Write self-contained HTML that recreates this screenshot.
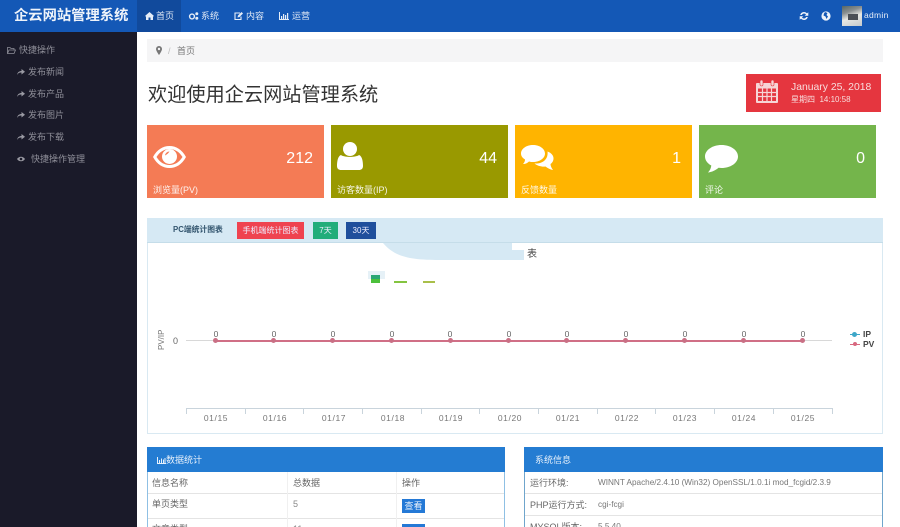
<!DOCTYPE html>
<html lang="zh">
<head>
<meta charset="utf-8">
<title>企云网站管理系统</title>
<style>
html,body{margin:0;padding:0;background:#fff;width:900px;height:527px;overflow:hidden;}
#w{position:relative;width:900px;height:527px;overflow:hidden;font-family:"Liberation Sans","Noto Sans CJK SC",sans-serif;font-size:9px;color:#666;}
.a{position:absolute;white-space:nowrap;}
svg{position:absolute;display:block;overflow:visible;}
.side{color:#8f8f99;font-size:9px;line-height:12px;}
.nav{color:#dfe8f5;font-size:9px;line-height:12px;}
.card{position:absolute;top:125px;width:177px;height:73px;}
.card .n{position:absolute;right:11px;top:24px;font-size:16px;line-height:20px;color:#fff;}
.card .l{position:absolute;left:6px;top:59px;font-size:9px;line-height:12px;color:#fff;opacity:.9;white-space:nowrap;}
.btn{position:absolute;top:222px;height:17px;line-height:17px;text-align:center;color:#eef;font-size:8px;}
.tk{position:absolute;top:408px;width:1px;height:6px;background:#c9d4dc;}
.xl{position:absolute;top:413px;width:40px;text-align:center;font-size:8.5px;line-height:11px;color:#777;letter-spacing:.6px;}
.z{position:absolute;top:329px;width:12px;text-align:center;font-size:8.5px;line-height:11px;color:#666;}
.dot{position:absolute;top:338px;width:5px;height:5px;border-radius:50%;background:#c97085;}
.hl{position:absolute;height:1px;background:#e4e4e4;}
.vl{position:absolute;width:1px;background:#f0f0f0;}
</style>
</head>
<body>
<div id="w">
<!-- header -->
<div class="a" style="left:0;top:0;width:900px;height:32px;background:#1458b6;"></div>
<div class="a" style="left:137px;top:0;width:44px;height:32px;background:#114a9c;"></div>
<div class="a" style="left:14px;top:6px;font-size:14.3px;line-height:20px;font-weight:bold;color:#eef3fa;">企云网站管理系统</div>

<svg style="left:145px;top:12px" width="9" height="8" viewBox="0 0 9 8"><path d="M0 4 4.500 0 9 4 8 4.600V8H5.500V5.500H3.500V8H1V4.600Z" fill="#e6edf7"/></svg>
<div class="a nav" style="left:156px;top:10px;">首页</div>
<svg style="left:189px;top:12px" width="10" height="8" viewBox="0 0 10 8"><circle cx="3" cy="4.500" r="2.400" fill="none" stroke="#e6edf7" stroke-width="1.400"/><circle cx="7.800" cy="1.800" r="1.500" fill="#e6edf7"/><circle cx="7.800" cy="6.200" r="1.500" fill="#e6edf7"/></svg>
<div class="a nav" style="left:201px;top:10px;">系统</div>
<svg style="left:234px;top:12px" width="9" height="8" viewBox="0 0 9 8"><path d="M6 1H1V7.500H7V4.500" fill="none" stroke="#e6edf7" stroke-width="1.100"/><path d="M3.500 5.500 4 3.500 7.500 0 9 1.500 5.500 5Z" fill="#e6edf7"/></svg>
<div class="a nav" style="left:246px;top:10px;">内容</div>
<svg style="left:279px;top:12px" width="10" height="8" viewBox="0 0 10 8"><path d="M.5 0V7.500H10" fill="none" stroke="#e6edf7"/><path d="M2 4h1.200v3H2zM4 2h1.200v5H4zM6 3h1.200v4H6zM8 1h1.200v6H8z" fill="#e6edf7"/></svg>
<div class="a nav" style="left:292px;top:10px;">运营</div>

<svg style="left:799px;top:11px" width="10" height="10" viewBox="0 0 10 10"><path d="M1.200 4A3.900 3.900 0 0 1 8 2.400L9.300 1.200V4.800H5.700L7 3.500A2.400 2.400 0 0 0 2.800 4ZM8.800 6A3.900 3.900 0 0 1 2 7.600L.7 8.800V5.200H4.300L3 6.500A2.400 2.400 0 0 0 7.200 6Z" fill="#eef3fa"/></svg>
<svg style="left:821px;top:11px" width="10" height="10" viewBox="0 0 10 10"><circle cx="5" cy="5" r="4.600" fill="#eef3fa"/><path d="M4 1 6.500 2 5.500 4 7 5.500 5.500 8 4.500 5.500 2.500 4.500 3 2.500Z" fill="#1458b6"/></svg>
<div class="a" style="left:842px;top:6px;width:20px;height:20px;background:linear-gradient(160deg,#566 0,#8a8f90 30%,#e8e8e4 55%,#c4c9cc 100%);"></div>
<div class="a" style="left:848px;top:14px;width:10px;height:6px;background:#4b4f55;"></div>
<div class="a" style="left:864px;top:9px;font-size:8.5px;line-height:12px;color:#e6edf7;letter-spacing:.3px;">admin</div>

<!-- sidebar -->
<div class="a" style="left:0;top:32px;width:137px;height:495px;background:#1a1a29;"></div>
<svg style="left:7px;top:47px" width="9" height="7" viewBox="0 0 9 7"><path d="M.5 6.500V.5H3L4 1.500H7V3M.5 6.500H7L8.500 3H2Z" fill="none" stroke="#8f8f99" stroke-width=".8"/></svg>
<div class="a side" style="left:19px;top:44px;">快捷操作</div>
<svg style="left:17px;top:69px" width="8" height="6" viewBox="0 0 8 6"><path d="M0 6C.5 3 2.500 2 4.500 2V0L8 2.800 4.500 5.500V3.500C2.500 3.500 1 4 0 6Z" fill="#9a9aa3"/></svg>
<div class="a side" style="left:28px;top:66px;">发布新闻</div>
<svg style="left:17px;top:91px" width="8" height="6" viewBox="0 0 8 6"><path d="M0 6C.5 3 2.500 2 4.500 2V0L8 2.800 4.500 5.500V3.500C2.500 3.500 1 4 0 6Z" fill="#9a9aa3"/></svg>
<div class="a side" style="left:28px;top:88px;">发布产品</div>
<svg style="left:17px;top:112px" width="8" height="6" viewBox="0 0 8 6"><path d="M0 6C.5 3 2.500 2 4.500 2V0L8 2.800 4.500 5.500V3.500C2.500 3.500 1 4 0 6Z" fill="#9a9aa3"/></svg>
<div class="a side" style="left:28px;top:109px;">发布图片</div>
<svg style="left:17px;top:134px" width="8" height="6" viewBox="0 0 8 6"><path d="M0 6C.5 3 2.500 2 4.500 2V0L8 2.800 4.500 5.500V3.500C2.500 3.500 1 4 0 6Z" fill="#9a9aa3"/></svg>
<div class="a side" style="left:28px;top:131px;">发布下载</div>
<svg style="left:17px;top:156px" width="8" height="6" viewBox="0 0 8 6"><path d="M0 3C2 0 6 0 8 3 6 6 2 6 0 3Z" fill="#9a9aa3"/><circle cx="4" cy="3" r="1.300" fill="#1a1a29"/></svg>
<div class="a side" style="left:31px;top:153px;">快捷操作管理</div>

<!-- breadcrumb -->
<div class="a" style="left:147px;top:39px;width:736px;height:23px;background:#f5f5f6;"></div>
<svg style="left:156px;top:46px" width="6" height="9" viewBox="0 0 6 9"><path d="M3 0A3 3 0 0 0 0 3C0 5 3 9 3 9S6 5 6 3A3 3 0 0 0 3 0Z" fill="#777"/><circle cx="3" cy="3" r="1.200" fill="#f5f5f6"/></svg>
<div class="a" style="left:168px;top:45px;font-size:9px;line-height:12px;color:#bbb;">/</div>
<div class="a" style="left:177px;top:45px;font-size:9px;line-height:12px;color:#777;">首页</div>

<!-- title -->
<div class="a" style="left:148px;top:83px;font-size:19.2px;line-height:26px;color:#333;">欢迎使用企云网站管理系统</div>

<!-- date -->
<div class="a" style="left:746px;top:74px;width:135px;height:38px;background:#e5363f;"></div>
<svg style="left:756px;top:80px" width="22" height="23" viewBox="0 0 22 23"><path d="M1 3H21Q22 3 22 4V22Q22 23 21 23H1Q0 23 0 22V4Q0 3 1 3Z" fill="#f6d5d6"/><path d="M2 8.500H20V21H2Z" fill="#e5363f"/><path d="M2 12.500H20M2 16.500H20M6.500 8.500V21M11 8.500V21M15.500 8.500V21" stroke="#f6d5d6" stroke-width="1.200"/><rect x="4" y="0" width="3" height="6" rx="1.500" fill="#f6d5d6" stroke="#e5363f" stroke-width=".6"/><rect x="15" y="0" width="3" height="6" rx="1.500" fill="#f6d5d6" stroke="#e5363f" stroke-width=".6"/></svg>
<div class="a" style="left:791px;top:81px;font-size:10.4px;line-height:14px;color:#f8dcdc;">January 25, 2018</div>
<div class="a" style="left:791px;top:94px;font-size:8px;line-height:12px;color:#f8dcdc;">星期四&nbsp;&nbsp;14:10:58</div>

<!-- cards -->
<div class="card" style="left:147px;background:#f47b55;">
  <svg style="left:6px;top:21px" width="33" height="22" viewBox="0 0 33 22"><path d="M0 11C4 3.500 10 0 16.500 0S29 3.500 33 11C29 18.500 23 22 16.500 22S4 18.500 0 11ZM3.500 11C7 16.500 11.500 19 16.500 19S26 16.500 29.500 11C26 5.500 21.500 3 16.500 3S7 5.500 3.500 11Z" fill="#fff" fill-rule="evenodd"/><circle cx="16.500" cy="10.500" r="7.500" fill="#fff"/><path d="M12 9.500A4.500 4.500 0 0 1 16.500 5.500C15.500 7 14 8.500 12 9.500Z" fill="#f47b55"/></svg>
  <div class="n">212</div><div class="l">浏览量(PV)</div>
</div>
<div class="card" style="left:331px;background:#999900;">
  <svg style="left:6px;top:17px" width="26" height="28" viewBox="0 0 26 28"><circle cx="13" cy="7" r="7" fill="#fff"/><path d="M4 13C7 15.500 19 15.500 22 13 25 14 26 19 26 24 26 27 24 28 22 28H4C2 28 0 27 0 24 0 19 1 14 4 13Z" fill="#fff"/></svg>
  <div class="n">44</div><div class="l">访客数量(IP)</div>
</div>
<div class="card" style="left:515px;background:#ffb400;">
  <svg style="left:6px;top:20px" width="33" height="26" viewBox="0 0 33 26"><path d="M12 0C18.500 0 24 3.700 24 8.500S18.500 17 12 17C10.500 17 9.500 17 8 16.500 6.500 18 4.500 19 2 19 3.500 17.500 4 16 4 14.500 1.500 13 0 11 0 8.500 0 3.700 5.500 0 12 0Z" fill="#fff"/><path d="M26.500 6.500C30.500 8 32.500 10.500 32.500 13.500 32.500 16 31 18 29.500 19 29.500 21 30.500 23 32 25 29 24.500 26.500 23 24.500 21.500 21 22 16.500 21 13.500 18.500 21.500 19 27.500 14.500 26.500 6.500Z" fill="#fff"/></svg>
  <div class="n">1</div><div class="l">反馈数量</div>
</div>
<div class="card" style="left:699px;background:#74b54b;">
  <svg style="left:6px;top:20px" width="33" height="28" viewBox="0 0 33 28"><path d="M16.500 0C25.500 0 33 5 33 11.500S25.500 23 16.500 23C15.500 23 14.500 23 13.500 22.800 10.500 25.500 7 27 3 27.500 5 25.500 6 23 6.300 20.500 2.500 18.500 0 15.200 0 11.500 0 5 7.500 0 16.500 0Z" fill="#fff"/></svg>
  <div class="n">0</div><div class="l">评论</div>
</div>

<!-- chart panel -->
<div class="a" style="left:147px;top:218px;width:736px;height:216px;border:1px solid #d9e9f2;border-top:0;box-sizing:border-box;"></div>
<div class="a" style="left:147px;top:218px;width:736px;height:25px;background:#d6e9f4;border-bottom:1px solid #c5dde9;box-sizing:border-box;"></div>
<div class="a" style="left:173px;top:224px;font-size:7.8px;line-height:12px;font-weight:bold;color:#34566f;">PC端统计图表</div>
<div class="btn" style="left:237px;width:67px;background:#ef4350;">手机端统计图表</div>
<div class="btn" style="left:313px;width:25px;background:#22ad7a;">7天</div>
<div class="btn" style="left:346px;width:30px;background:#1f4f9c;">30天</div>
<svg style="left:380px;top:243px" width="150" height="17" viewBox="0 0 150 17"><path d="M3 0H132V7H144V17H60C30 17 15 14 3 0Z" fill="#d6e9f4"/></svg>
<div class="a" style="left:527px;top:248px;font-size:10px;line-height:14px;color:#444;">表</div>
<div class="a" style="left:368px;top:271px;width:17px;height:8px;background:#e6f1f7;"></div>
<div class="a" style="left:371px;top:275px;width:9px;height:4px;background:#2aa775;"></div>
<div class="a" style="left:371px;top:279px;width:9px;height:4px;background:#4cc03c;"></div>
<div class="a" style="left:394px;top:281px;width:13px;height:2px;background:#84c440;"></div>
<div class="a" style="left:423px;top:281px;width:12px;height:2px;background:#a9bf4a;"></div>

<!-- chart -->
<div class="a" style="left:152px;top:334px;font-size:8px;line-height:12px;color:#777;transform:rotate(-90deg);transform-origin:center;width:20px;text-align:center;">PV/IP</div>
<div class="a" style="left:173px;top:335px;font-size:9px;line-height:12px;color:#666;">0</div>
<div class="hl" style="left:186px;top:340px;width:646px;background:#d8d8d8;"></div>
<div class="a" style="left:215px;top:340px;width:587px;height:2px;background:#d06f86;"></div>
<div class="dot" style="left:213px"></div><div class="dot" style="left:271px"></div><div class="dot" style="left:330px"></div><div class="dot" style="left:389px"></div><div class="dot" style="left:448px"></div><div class="dot" style="left:506px"></div><div class="dot" style="left:564px"></div><div class="dot" style="left:623px"></div><div class="dot" style="left:682px"></div><div class="dot" style="left:741px"></div><div class="dot" style="left:800px"></div>
<div class="z" style="left:210px">0</div><div class="z" style="left:268px">0</div><div class="z" style="left:327px">0</div><div class="z" style="left:386px">0</div><div class="z" style="left:444px">0</div><div class="z" style="left:503px">0</div><div class="z" style="left:561px">0</div><div class="z" style="left:620px">0</div><div class="z" style="left:679px">0</div><div class="z" style="left:738px">0</div><div class="z" style="left:797px">0</div>

<div class="hl" style="left:186px;top:408px;width:647px;background:#c9d4dc;"></div>
<div class="tk" style="left:186px"></div><div class="tk" style="left:245px"></div><div class="tk" style="left:303px"></div><div class="tk" style="left:362px"></div><div class="tk" style="left:421px"></div><div class="tk" style="left:479px"></div><div class="tk" style="left:538px"></div><div class="tk" style="left:597px"></div><div class="tk" style="left:655px"></div><div class="tk" style="left:714px"></div><div class="tk" style="left:773px"></div><div class="tk" style="left:832px"></div>
<div class="xl" style="left:196px">01/15</div><div class="xl" style="left:255px">01/16</div><div class="xl" style="left:314px">01/17</div><div class="xl" style="left:373px">01/18</div><div class="xl" style="left:431px">01/19</div><div class="xl" style="left:490px">01/20</div><div class="xl" style="left:548px">01/21</div><div class="xl" style="left:607px">01/22</div><div class="xl" style="left:665px">01/23</div><div class="xl" style="left:724px">01/24</div><div class="xl" style="left:783px">01/25</div>

<div class="a" style="left:850px;top:334px;width:10px;height:1px;background:#3ea7c8;"></div>
<div class="a" style="left:852px;top:332px;width:5px;height:5px;border-radius:50%;background:#3ea7c8;"></div>
<div class="a" style="left:863px;top:329px;font-size:8.5px;line-height:11px;font-weight:bold;color:#444;">IP</div>
<div class="a" style="left:850px;top:344px;width:10px;height:1px;background:#d8687f;"></div>
<div class="a" style="left:853px;top:342px;width:4px;height:4px;border-radius:50%;background:#d8687f;"></div>
<div class="a" style="left:863px;top:339px;font-size:8.5px;line-height:11px;font-weight:bold;color:#444;">PV</div>

<!-- left table -->
<div class="a" style="left:147px;top:447px;width:358px;height:90px;border:1px solid #8fc0e4;box-sizing:border-box;"></div>
<div class="a" style="left:147px;top:447px;width:358px;height:25px;background:#247cd2;"></div>
<svg style="left:157px;top:457px" width="9" height="7" viewBox="0 0 9 7"><path d="M.5 0V6.500H9" fill="none" stroke="#e6f0fb"/><path d="M2 3h1v3H2zM4 1.500h1V6H4zM6 2.500h1V6H6zM7.500 1h1v5h-1z" fill="#e6f0fb"/></svg>
<div class="a" style="left:166px;top:454px;font-size:9px;line-height:12px;color:#e6f0fb;">数据统计</div>
<div class="a" style="left:152px;top:477px;font-size:9px;line-height:12px;color:#666;">信息名称</div>
<div class="a" style="left:293px;top:477px;font-size:9px;line-height:12px;color:#666;">总数据</div>
<div class="a" style="left:402px;top:477px;font-size:9px;line-height:12px;color:#666;">操作</div>
<div class="hl" style="left:148px;top:493px;width:356px;"></div>
<div class="a" style="left:152px;top:498px;font-size:9px;line-height:12px;color:#666;">单页类型</div>
<div class="a" style="left:293px;top:498px;font-size:9px;line-height:12px;color:#888;">5</div>
<div class="a" style="left:402px;top:499px;width:23px;height:14px;background:#2479d6;text-align:center;line-height:14px;font-size:9px;color:#e8f1fb;">查看</div>
<div class="hl" style="left:148px;top:518px;width:356px;"></div>
<div class="a" style="left:152px;top:523px;font-size:9px;line-height:12px;color:#666;">文章类型</div>
<div class="a" style="left:293px;top:523px;font-size:9px;line-height:12px;color:#888;">11</div>
<div class="a" style="left:402px;top:524px;width:23px;height:14px;background:#2479d6;"></div>
<div class="vl" style="left:287px;top:472px;height:55px;"></div>
<div class="vl" style="left:396px;top:472px;height:55px;"></div>

<!-- right table -->
<div class="a" style="left:524px;top:447px;width:359px;height:90px;border:1px solid #6fa5cc;box-sizing:border-box;"></div>
<div class="a" style="left:524px;top:447px;width:359px;height:25px;background:#247cd2;"></div>
<div class="a" style="left:535px;top:454px;font-size:9px;line-height:12px;color:#e6f0fb;">系统信息</div>
<div class="a" style="left:530px;top:477px;font-size:9px;line-height:12px;color:#666;">运行环境:</div>
<div class="a" style="left:598px;top:477px;font-size:8.2px;line-height:12px;color:#777;">WINNT Apache/2.4.10 (Win32) OpenSSL/1.0.1i mod_fcgid/2.3.9</div>
<div class="hl" style="left:525px;top:493px;width:357px;"></div>
<div class="a" style="left:530px;top:499px;font-size:9px;line-height:12px;color:#666;">PHP运行方式:</div>
<div class="a" style="left:598px;top:499px;font-size:8.2px;line-height:12px;color:#777;">cgi-fcgi</div>
<div class="hl" style="left:525px;top:515px;width:357px;"></div>
<div class="a" style="left:530px;top:521px;font-size:9px;line-height:12px;color:#666;">MYSQL版本:</div>
<div class="a" style="left:598px;top:521px;font-size:8.2px;line-height:12px;color:#777;">5.5.40</div>
</div>
</body>
</html>
